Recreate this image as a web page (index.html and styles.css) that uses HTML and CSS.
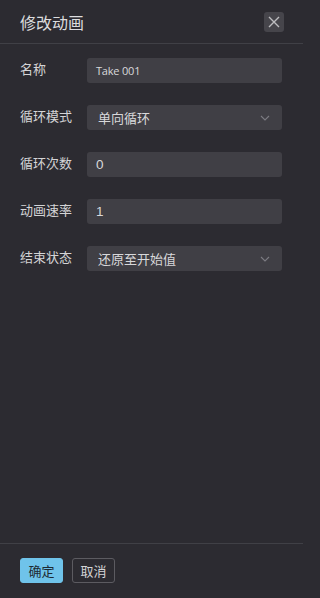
FILE: index.html
```html
<!DOCTYPE html>
<html lang="zh">
<head>
<meta charset="utf-8">
<link rel="stylesheet" href="styles.css">
</head>
<body>
<div class="dialog">
  <div class="header">
    <div class="title">修改动画</div>
    <button class="close" aria-label="关闭">
      <svg width="12" height="12" viewBox="0 0 12 12"><path d="M1 1L11 11M11 1L1 11" stroke="#bdbdc0" stroke-width="1.4" fill="none"/></svg>
    </button>
  </div>
  <div class="body">
    <div class="row">
      <div class="label">名称</div>
      <div class="field small">Take 001</div>
    </div>
    <div class="row">
      <div class="label">循环模式</div>
      <div class="field select"><span>单向循环</span>
        <svg class="chev" width="10" height="6" viewBox="0 0 10 6"><path d="M1 1L5 5L9 1" stroke="#7c7c82" stroke-width="1.1" fill="none"/></svg>
      </div>
    </div>
    <div class="row">
      <div class="label">循环次数</div>
      <div class="field num">0</div>
    </div>
    <div class="row">
      <div class="label">动画速率</div>
      <div class="field num">1</div>
    </div>
    <div class="row">
      <div class="label">结束状态</div>
      <div class="field select"><span>还原至开始值</span>
        <svg class="chev" width="10" height="6" viewBox="0 0 10 6"><path d="M1 1L5 5L9 1" stroke="#7c7c82" stroke-width="1.1" fill="none"/></svg>
      </div>
    </div>
  </div>
  <div class="footer">
    <button class="btn primary">确定</button>
    <button class="btn">取消</button>
  </div>
</div>
</body>
</html>
```
FILE: styles.css
```css
html, body {
  margin: 0;
  padding: 0;
  background: #2c2b31;
}
body {
  font-family: "Noto Sans CJK SC", "Noto Sans", sans-serif;
  color: #d6d6d8;
}
.dialog {
  width: 303px;
  height: 598px;
  display: flex;
  flex-direction: column;
  box-sizing: border-box;
}
.header {
  height: 44px;
  border-bottom: 1px solid #404046;
  display: flex;
  align-items: center;
  justify-content: space-between;
  padding: 0 19px 0 20px;
  box-sizing: border-box;
  flex: none;
}
.title {
  font-size: 16px;
  color: #dcdcde;
  line-height: 20px;
}
.close {
  width: 20px;
  height: 20px;
  border: none;
  border-radius: 3px;
  background: #46454b;
  padding: 0;
  display: flex;
  align-items: center;
  justify-content: center;
  margin-top: 1px;
}
.body {
  flex: 1;
  padding: 14px 21px 0 20px;
  display: flex;
  flex-direction: column;
  gap: 22px;
}
.row {
  display: flex;
  align-items: center;
  height: 25px;
}
.label {
  width: 67px;
  font-size: 13px;
  color: #d4d4d6;
  line-height: 18px;
  margin-top: -3px;
  flex: none;
}
.field {
  flex: 1;
  height: 25px;
  background: #403f45;
  border-radius: 3px;
  box-sizing: border-box;
  padding: 0 9px;
  display: flex;
  align-items: center;
  font-size: 13px;
  color: #d8d8da;
}
.field.small {
  font-family: "Open Sans", "Noto Sans", sans-serif;
  font-size: 11px;
  letter-spacing: -0.2px;
}
.field.num {
  font-family: "Liberation Sans", sans-serif;
  font-size: 13.5px;
}
.field.select {
  padding: 0 12px 0 11px;
  justify-content: space-between;
}
.chev {
  margin-top: 1px;
}
.footer {
  height: 55px;
  border-top: 1px solid #404046;
  flex: none;
  display: flex;
  gap: 9px;
  padding: 14px 20px 0;
  box-sizing: border-box;
}
.btn {
  width: 43px;
  height: 25px;
  border-radius: 3px;
  box-sizing: border-box;
  font-family: "Noto Sans CJK SC", sans-serif;
  font-size: 13px;
  padding: 0;
  background: transparent;
  border: 1px solid #5c5b61;
  color: #d4d4d6;
  line-height: 1;
}
.btn.primary {
  background: #6fc3ea;
  border-color: #6fc3ea;
  color: #1d2a33;
}
```
